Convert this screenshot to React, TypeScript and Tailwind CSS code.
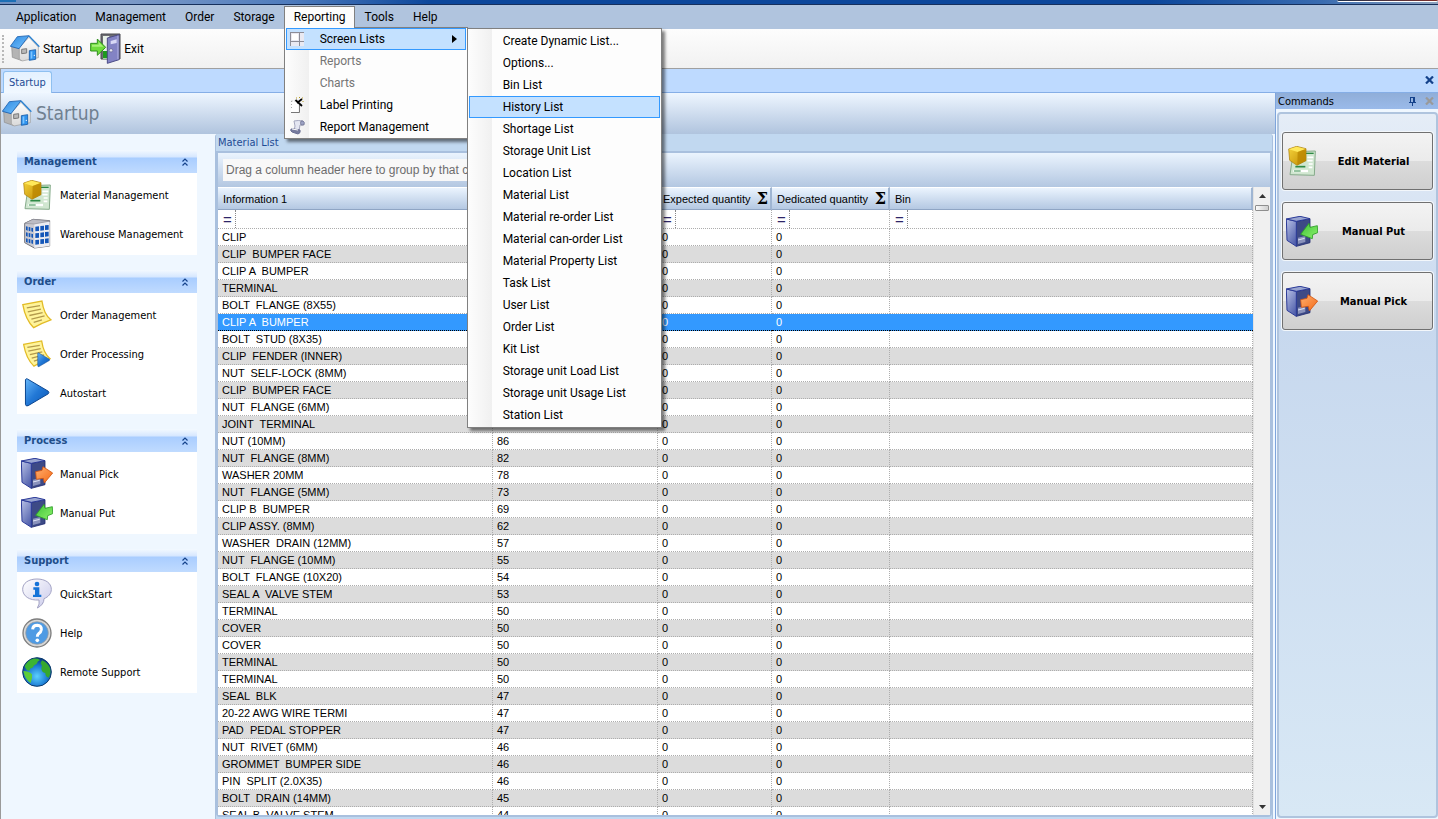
import React from "react";

const TAHOMA = "font-['DejaVu_Sans_Condensed','DejaVu_Sans',sans-serif]";

/* ---------- Icons ---------- */

function HouseIcon() {
  return (
    <svg width="30" height="27" viewBox="0 0 90 81" aria-hidden="true">
      <defs>
        <linearGradient id="roof" x1="0" y1="0" x2="1" y2="1">
          <stop offset="0" stopColor="#2f8ae0" />
          <stop offset="1" stopColor="#74c2ff" />
        </linearGradient>
        <linearGradient id="wall" x1="0" y1="0" x2="0" y2="1">
          <stop offset="0" stopColor="#ffffff" />
          <stop offset="1" stopColor="#d9d9d9" />
        </linearGradient>
      </defs>
      <path d="M5 34 28 40 36 77 7 67Z" fill="#b4b4b4" stroke="#8a8a8a" strokeWidth="2" />
      <path d="M28 37 57 7 85 36V68L36 78 28 72Z" fill="url(#wall)" stroke="#9a9a9a" strokeWidth="2" />
      <path d="M1 34 22 5 57 2 27 41Z" fill="url(#roof)" stroke="#1a5fae" strokeWidth="2.5" />
      <path d="M57 3 88 35" stroke="#2a80d0" strokeWidth="4" fill="none" />
      <path d="M35 43 50 41V54L35 56Z" fill="#b9b9b9" stroke="#7a7a7a" strokeWidth="3" />
      <path d="M58 47 77 44V73L58 76Z" fill="#2f93ee" stroke="#135aa8" strokeWidth="2.5" />
      <path d="M62 50 67 49V70L62 71Z" fill="#7cc4ff" />
      <circle cx="73" cy="61" r="2" fill="#fff" />
    </svg>
  );
}

function ExitIcon() {
  return (
    <svg width="32" height="31" viewBox="0 0 96 93" aria-hidden="true">
      <path d="M33 3H90V78H33Z" fill="#6d6d72" stroke="#4a4a50" strokeWidth="3" />
      <path d="M39 9H58V78H39Z" fill="#e8f1e8" />
      <path d="M39 54H56V76H39Z" fill="#1d9a1d" />
      <path d="M52 15 87 5V80L52 91Z" fill="#8383c4" stroke="#4c4c86" strokeWidth="3" />
      <path d="M62 24 80 19V30L62 34Z" fill="#d9d9f5" />
      <path d="M84 8V79" stroke="#b4b4e4" strokeWidth="3" />
      <circle cx="63" cy="52" r="5" fill="#e6e6ef" stroke="#55557c" strokeWidth="1.5" />
      <path d="M2 31H22V18L47 43 22 67V54H2Z" fill="#6fdc3c" stroke="#2f8f1d" strokeWidth="3" />
      <path d="M6 35H26V27L40 41H6Z" fill="#b4f58a" opacity="0.8" />
    </svg>
  );
}

function MaterialIcon() {
  return (
    <svg width="28" height="30" viewBox="0 0 84 90" aria-hidden="true">
      <defs>
        <linearGradient id="gold" x1="0" y1="0" x2="1" y2="1">
          <stop offset="0" stopColor="#f6d43c" />
          <stop offset="1" stopColor="#c08a00" />
        </linearGradient>
      </defs>
      <path d="M16 17 82 15 79 88 6 86Z" fill="#d0e6d0" stroke="#86ab8b" strokeWidth="3" />
      <path d="M54 22H77" stroke="#2e8a45" strokeWidth="4" />
      <path d="M58 34H76M58 44H74M62 54H74M62 64H73" stroke="#fff" strokeWidth="5" />
      <path d="M22 62H52" stroke="#2e8a45" strokeWidth="5" />
      <path d="M16 75H60" stroke="#fff" strokeWidth="7" />
      <path d="M18 75H38" stroke="#2e8a45" strokeWidth="3" />
      <path d="M2 9 26 1 54 8V44L27 58 5 43Z" fill="url(#gold)" stroke="#a87800" strokeWidth="2" />
      <path d="M3 10 26 2 53 9 29 18Z" fill="#ffe85a" />
      <path d="M29 18 53 9V43L28 57Z" fill="#b98500" opacity="0.75" />
    </svg>
  );
}

function WarehouseIcon() {
  const rows = [0, 1, 2];
  return (
    <svg width="28" height="31" viewBox="0 0 84 93" aria-hidden="true">
      <path d="M5 16 30 4 80 8V84L34 90 5 74Z" fill="#c9c9d0" stroke="#77777e" strokeWidth="3" />
      <path d="M34 18 80 11V84L34 90Z" fill="#ececf1" />
      <path d="M5 16 30 4 80 9 34 18Z" fill="#bcbcc4" stroke="#85858c" strokeWidth="1.5" />
      {rows.map((r) => (
        <g key={r} fill="#1456b8">
          <path d={`M9 ${25 + r * 18}l5 1v12l-5-2z`} />
          <path d={`M17 ${27 + r * 18}l5 1v12l-5-2z`} />
          <path d={`M25 ${29 + r * 18}l5 1v12l-5-2z`} />
          <path d={`M37 ${26 + r * 20}l11-1v14l-11 1z`} />
          <path d={`M52 ${24 + r * 20}l11-1v14l-11 1z`} />
          <path d={`M66 ${22 + r * 20}l11-1v14l-11 1z`} />
        </g>
      ))}
    </svg>
  );
}

function PlayShape() {
  return (
    <>
      <defs>
        <linearGradient id="play" x1="0" y1="0" x2="1" y2="1">
          <stop offset="0" stopColor="#66b6f8" />
          <stop offset="0.5" stopColor="#2278d6" />
          <stop offset="1" stopColor="#0b57b5" />
        </linearGradient>
      </defs>
      <path d="M10 5Q11 1 16 3L79 40Q83 44 79 48L18 84Q11 87 10 80Z" fill="url(#play)" stroke="#0a4590" strokeWidth="3" />
    </>
  );
}

function NoteShape() {
  return (
    <>
      <path d="M2 14 60 3Q66 44 87 60Q58 70 35 84Q10 60 2 14Z" fill="#fff49a" stroke="#e2bb26" strokeWidth="4" />
      <path d="M14 24 54 17M17 36 57 28M22 47 62 38M28 58 68 48M35 68 60 60" stroke="#b39a4c" strokeWidth="4" fill="none" />
    </>
  );
}

function NoteIcon() {
  return (
    <svg width="30" height="29" viewBox="0 0 90 88" aria-hidden="true">
      <NoteShape />
    </svg>
  );
}

function NotePlayIcon() {
  return (
    <svg width="28" height="28" viewBox="0 0 90 90" aria-hidden="true">
      <NoteShape />
      <g transform="translate(42 40) scale(0.54)">
        <PlayShape />
      </g>
    </svg>
  );
}

function PlayIcon() {
  return (
    <svg width="30" height="29" viewBox="0 0 90 88" aria-hidden="true">
      <PlayShape />
    </svg>
  );
}

function TowerIcon({ put }: { put?: boolean }) {
  return (
    <svg width="32" height="31" viewBox="0 0 96 93" aria-hidden="true">
      <defs>
        <linearGradient id="side" x1="0" y1="0" x2="0.6" y2="1">
          <stop offset="0" stopColor="#b9c2e6" />
          <stop offset="1" stopColor="#5463ae" />
        </linearGradient>
        <linearGradient id="orange" x1="0" y1="0" x2="1" y2="1">
          <stop offset="0" stopColor="#ffb070" />
          <stop offset="1" stopColor="#f46a16" />
        </linearGradient>
        <linearGradient id="green" x1="0" y1="0" x2="1" y2="1">
          <stop offset="0" stopColor="#3fc23a" />
          <stop offset="1" stopColor="#8df26a" />
        </linearGradient>
      </defs>
      <path d="M31 16 72 8V80L31 91Z" fill="#3d4a86" stroke="#232c72" strokeWidth="2.5" />
      <path d="M1 9 31 16V91L3 73Z" fill="url(#side)" stroke="#2b3a98" strokeWidth="3" />
      <path d="M1 9 42 1 72 8 31 16Z" fill="#99a5d0" stroke="#2b3a98" strokeWidth="3" />
      <path d="M36 65 58 60V78L36 84Z" fill="#8a92bc" />
      <path d="M36 72 56 67" stroke="#dfe3f5" strokeWidth="3" />
      {put ? (
        <path d="M44 55 69 22 72 34 94 29 95 50 80 56 79 68Z" fill="url(#green)" stroke="#2d9c27" strokeWidth="2.5" strokeLinejoin="round" />
      ) : (
        <path d="M44 41 63 37 66 26 95 45 70 75 67 61 46 64Z" fill="url(#orange)" stroke="#d2540f" strokeWidth="2.5" strokeLinejoin="round" />
      )}
    </svg>
  );
}

function InfoIcon() {
  return (
    <svg width="30" height="31" viewBox="0 0 90 93" aria-hidden="true">
      <defs>
        <linearGradient id="bubble" x1="0" y1="0" x2="1" y2="1">
          <stop offset="0" stopColor="#ffffff" />
          <stop offset="1" stopColor="#c9c9ea" />
        </linearGradient>
      </defs>
      <path d="M45 3C70 3 88 15 88 34C88 47 79 57 66 62Q66 80 46 90Q54 78 51 66C22 68 2 54 2 34C2 15 20 3 45 3Z" fill="url(#bubble)" stroke="#a3a3c4" strokeWidth="3" />
      <circle cx="45" cy="18" r="7" fill="#1573d8" />
      <path d="M34 28H52V50H58V57H33V50H39V35H34Z" fill="#1573d8" />
    </svg>
  );
}

function HelpIcon() {
  return (
    <svg width="30" height="30" viewBox="0 0 90 90" aria-hidden="true">
      <circle cx="45" cy="45" r="42" fill="#d6d6d6" stroke="#7d7d7d" strokeWidth="4" />
      <circle cx="45" cy="45" r="34" fill="#4f9be4" stroke="#9a9a9a" strokeWidth="2" />
      <path d="M32 34Q33 22 46 22Q59 23 58 35Q57 43 50 47Q46 50 46 56" fill="none" stroke="#fff" strokeWidth="9" />
      <circle cx="46" cy="67" r="5.500" fill="#fff" />
    </svg>
  );
}

function GlobeIcon() {
  return (
    <svg width="30" height="30" viewBox="0 0 90 90" aria-hidden="true">
      <defs>
        <radialGradient id="sea" cx="0.5" cy="0.65" r="0.6">
          <stop offset="0" stopColor="#5cd0ff" />
          <stop offset="0.6" stopColor="#1c7cd4" />
          <stop offset="1" stopColor="#0b3f86" />
        </radialGradient>
      </defs>
      <circle cx="45" cy="45" r="43" fill="url(#sea)" stroke="#0e3c6e" strokeWidth="3" />
      <path d="M8 28Q16 10 34 5Q48 4 54 9Q46 13 44 20Q34 24 32 32Q24 32 22 42Q12 40 8 28Z" fill="#3cb432" />
      <path d="M4 42Q20 42 30 52Q32 62 26 78Q8 66 4 42Z" fill="#5ccc38" />
      <path d="M60 10Q76 16 84 34Q88 50 80 62Q70 60 70 48Q58 46 58 34Q62 26 56 18Z" fill="#36a82e" />
    </svg>
  );
}

function GridIcon() {
  return (
    <svg width="14" height="14" viewBox="0 0 14 14" shapeRendering="crispEdges" aria-hidden="true">
      <rect width="14" height="14" fill="#e9e9f2" />
      <path d="M0 0.500H14M0.500 0V14M9.500 0V14M0 9.500H14" stroke="#8d8d98" fill="none" />
      <path d="M2 2H8V8H2Z" fill="#fff" />
    </svg>
  );
}

function LabelIcon() {
  return (
    <svg width="14" height="16" viewBox="0 0 14 16" aria-hidden="true">
      <path d="M1 4H8V15H1Z" fill="#fff" />
      <path d="M1.500 4H6M1.500 4V13" stroke="#aaa" strokeDasharray="1 2" fill="none" />
      <path d="M9.500 8V15.500H1" stroke="#777" fill="none" />
      <path d="M5.500 3 12 9M12 2 7 6" stroke="#000" strokeWidth="1.800" />
      <path d="M6 1H7M9 0.500H10M12 1H13M13 4V5" stroke="#b79a1e" />
    </svg>
  );
}

function ReportIcon() {
  return (
    <svg width="15" height="15" viewBox="0 0 15 15" aria-hidden="true">
      <path d="M4 1Q8 0 13 1Q15 3 13 5H10L9 11H4Q6 6 4 1Z" fill="#e4e6f2" stroke="#a4a7be" />
      <path d="M11 1Q10 3 11 5H14Q15 2 13 1Z" fill="#9da3c4" stroke="#6c6f8c" strokeWidth="0.700" />
      <path d="M1 9Q0 11 2 12L8 14Q11 13 10 10L4 9Z" fill="#767b9e" stroke="#6a6f94" />
      <path d="M2 9 8 10" stroke="#fff" />
    </svg>
  );
}

function Chevrons() {
  return (
    <svg width="6" height="8" viewBox="0 0 6 8" aria-hidden="true">
      <path d="M0.500 3.500 3 1 5.500 3.500M0.500 7.500 3 5 5.500 7.500" fill="none" stroke="#15428b" strokeWidth="1.200" />
    </svg>
  );
}

function Cross({ className }: { className: string }) {
  return (
    <svg width="9" height="8" viewBox="0 0 9 8" className={className} aria-hidden="true">
      <path d="M1 0.500 8 7.500M8 0.500 1 7.500" stroke="currentColor" strokeWidth="2.200" />
    </svg>
  );
}

function PinIcon() {
  return (
    <svg width="7" height="9" viewBox="0 0 7 9" shapeRendering="crispEdges" aria-hidden="true">
      <path d="M1 0H6V5H7V6H4V9H3V6H0V5H1ZM2 1V5H4V1Z" fill="#15428b" fillRule="evenodd" />
    </svg>
  );
}

/* ---------- Menus ---------- */

const screenLists = [
  "Create Dynamic List...",
  "Options...",
  "Bin List",
  "History List",
  "Shortage List",
  "Storage Unit List",
  "Location List",
  "Material List",
  "Material re-order List",
  "Material can-order List",
  "Material Property List",
  "Task List",
  "User List",
  "Order List",
  "Kit List",
  "Storage unit Load List",
  "Storage unit Usage List",
  "Station List",
];

const MENU_BOX =
  "absolute border border-[#808080] bg-[linear-gradient(to_right,#fdfdfd_0,#f0f0f0_24px,#fdfdfd_24px)] shadow-[3px_3px_3px_rgba(0,0,0,0.5)]";

function MenuEntry(props: { label: string; active?: boolean; disabled?: boolean; icon?: React.ReactNode; arrow?: boolean }) {
  return (
    <button
      type="button"
      role="menuitem"
      disabled={props.disabled}
      className={`flex h-[22px] w-full items-center border pr-2 text-left ${
        props.active ? "border-[#3399ff] bg-[#c4e1ff]" : "border-transparent"
      } ${props.disabled ? "text-[#757575]" : "text-black"}`}
    >
      <span className="flex w-[33px] shrink-0 items-center pl-[3px]">{props.icon}</span>
      <span className="grow whitespace-nowrap">{props.label}</span>
      {props.arrow && (
        <svg width="5" height="8" viewBox="0 0 5 8" aria-hidden="true">
          <path d="M0 0 5 4 0 8Z" fill="#000" />
        </svg>
      )}
    </button>
  );
}

function ReportingMenu() {
  return (
    <div role="menu" aria-label="Reporting" className={`${MENU_BOX} top-[21px] left-0 z-20 w-[184px] px-px`}>
      <MenuEntry label="Screen Lists" active arrow icon={<GridIcon />} />
      <MenuEntry label="Reports" disabled />
      <MenuEntry label="Charts" disabled />
      <MenuEntry label="Label Printing" icon={<LabelIcon />} />
      <MenuEntry label="Report Management" icon={<ReportIcon />} />
      <div role="menu" aria-label="Screen Lists" className={`${MENU_BOX} top-0 left-[182px] w-[195px] px-px py-px`}>
        {screenLists.map((label) => (
          <MenuEntry key={label} label={label} active={label === "History List"} />
        ))}
      </div>
    </div>
  );
}

function MenuBar() {
  return (
    <nav className="flex h-6 shrink-0 items-center bg-[#b0c4de] pl-[6px] text-[12px]">
      {["Application", "Management", "Order", "Storage", "Reporting", "Tools", "Help"].map((label) =>
        label === "Reporting" ? (
          <div key={label} className="relative">
            <button
              type="button"
              className="relative z-30 h-[22px] border border-b-0 border-[#808080] bg-[#fcfcfc] pr-2 pb-px pl-[9px]"
            >
              {label}
            </button>
            <ReportingMenu />
          </div>
        ) : (
          <button key={label} type="button" className="h-[22px] pr-[9px] pl-[10px]">
            {label}
          </button>
        )
      )}
    </nav>
  );
}

/* ---------- Sidebar ---------- */

const groups = [
  {
    title: "Management",
    items: [
      { label: "Material Management", icon: <MaterialIcon /> },
      { label: "Warehouse Management", icon: <WarehouseIcon /> },
    ],
  },
  {
    title: "Order",
    items: [
      { label: "Order Management", icon: <NoteIcon /> },
      { label: "Order Processing", icon: <NotePlayIcon /> },
      { label: "Autostart", icon: <PlayIcon /> },
    ],
  },
  {
    title: "Process",
    items: [
      { label: "Manual Pick", icon: <TowerIcon /> },
      { label: "Manual Put", icon: <TowerIcon put /> },
    ],
  },
  {
    title: "Support",
    items: [
      { label: "QuickStart", icon: <InfoIcon /> },
      { label: "Help", icon: <HelpIcon /> },
      { label: "Remote Support", icon: <GlobeIcon /> },
    ],
  },
];

function Sidebar() {
  return (
    <aside className={`flex w-[214px] shrink-0 flex-col gap-[15px] bg-[#eff7ff] pt-4 pr-[18px] pl-4 text-[11px] ${TAHOMA}`}>
      {groups.map((group) => (
        <section key={group.title} className="bg-white">
          <button
            type="button"
            className="flex h-[23px] w-full items-center justify-between bg-[linear-gradient(to_bottom,#f3f9ff_0,#d6e7ff_7px,#a9cdff_8px,#c0dbff_100%)] pr-[9px] pl-[7px] font-bold text-[#204d89]"
          >
            <span className="pt-[2px]">{group.title}</span>
            <Chevrons />
          </button>
          <ul className="pt-[2px] pb-[2px]">
            {group.items.map((item) => (
              <li key={item.label}>
                <a href="#" className="flex h-[39px] items-center pl-1">
                  <span className="flex w-8 justify-center">{item.icon}</span>
                  <span className="pt-[3px] pl-[7px] whitespace-nowrap">{item.label}</span>
                </a>
              </li>
            ))}
          </ul>
        </section>
      ))}
    </aside>
  );
}

/* ---------- Material table ---------- */

const materials: [string, string][] = [
  ["CLIP", ""],
  ["CLIP  BUMPER FACE", ""],
  ["CLIP A  BUMPER", ""],
  ["TERMINAL", ""],
  ["BOLT  FLANGE (8X55)", ""],
  ["CLIP A  BUMPER", ""],
  ["BOLT  STUD (8X35)", ""],
  ["CLIP  FENDER (INNER)", ""],
  ["NUT  SELF-LOCK (8MM)", ""],
  ["CLIP  BUMPER FACE", ""],
  ["NUT  FLANGE (6MM)", ""],
  ["JOINT  TERMINAL", ""],
  ["NUT (10MM)", "86"],
  ["NUT  FLANGE (8MM)", "82"],
  ["WASHER 20MM", "78"],
  ["NUT  FLANGE (5MM)", "73"],
  ["CLIP B  BUMPER", "69"],
  ["CLIP ASSY. (8MM)", "62"],
  ["WASHER  DRAIN (12MM)", "57"],
  ["NUT  FLANGE (10MM)", "55"],
  ["BOLT  FLANGE (10X20)", "54"],
  ["SEAL A  VALVE STEM", "53"],
  ["TERMINAL", "50"],
  ["COVER", "50"],
  ["COVER", "50"],
  ["TERMINAL", "50"],
  ["TERMINAL", "50"],
  ["SEAL  BLK", "47"],
  ["20-22 AWG WIRE TERMI", "47"],
  ["PAD  PEDAL STOPPER", "47"],
  ["NUT  RIVET (6MM)", "46"],
  ["GROMMET  BUMPER SIDE", "46"],
  ["PIN  SPLIT (2.0X35)", "46"],
  ["BOLT  DRAIN (14MM)", "45"],
  ["SEAL B  VALVE STEM", "44"],
];

const columns = [
  { title: "Information 1", sum: false },
  { title: "", sum: false },
  { title: "Expected quantity", sum: true },
  { title: "Dedicated quantity", sum: true },
  { title: "Bin", sum: false },
];

const SELECTED = 5;

function MaterialTable() {
  return (
    <table className="w-full table-fixed border-separate border-spacing-0 text-left">
      <colgroup>
        <col className="w-[275px]" />
        <col className="w-[165px]" />
        <col className="w-[114px]" />
        <col className="w-[118px]" />
        <col />
      </colgroup>
      <thead>
        <tr>
          {columns.map((c, i) => (
            <th
              key={i}
              className="border-t border-r-2 border-b border-t-white border-r-[#9fb5d2] border-b-[#8fa5c4] bg-linear-to-b from-[#ebf4fe] to-[#b4c8e2] p-0 font-normal"
            >
              <div className="flex h-[21px] items-center justify-between pt-px pr-[2px] pl-[5px]">
                <span className="whitespace-nowrap">{c.title}</span>
                {c.sum && <span className="font-['DejaVu_Serif',serif] text-[16px] leading-none font-bold">Σ</span>}
              </div>
            </th>
          ))}
        </tr>
        <tr>
          {columns.map((c, i) => (
            <td key={i} className="border-r border-b border-dotted border-[#adadad] bg-white p-0">
              <div className="flex h-[18px]">
                <span className="w-[18px] border-r border-dotted border-[#888] pl-[5px] text-[15px] leading-5 text-[#2e2668]">
                  =
                </span>
                <input aria-label={`Filter ${c.title}`} className="w-0 grow bg-transparent px-1 outline-none" />
              </div>
            </td>
          ))}
        </tr>
      </thead>
      <tbody>
        {materials.map(([name, quantity], i) => {
          const selected = i === SELECTED;
          const tone = selected
            ? "bg-[#3399ff] text-white"
            : i % 2
              ? "bg-[#dcdcdc] text-black"
              : "bg-white text-black";
          const line = selected
            ? "border-b border-dotted border-black"
            : "border-r border-b border-dotted border-[#adadad]";
          return (
            <tr key={i} className={tone}>
              {[name, quantity, "0", "0", ""].map((value, c) => (
                <td key={c} className={`h-[17px] p-0 pl-1 leading-4 whitespace-pre ${line}`}>
                  {value}
                </td>
              ))}
            </tr>
          );
        })}
      </tbody>
    </table>
  );
}

function ScrollBar() {
  return (
    <div className="flex w-[17px] shrink-0 flex-col items-center justify-between border-l border-[#e2e2e2] bg-[#f0f0f0]">
      <div className="flex w-full flex-col items-center">
        <button type="button" aria-label="Scroll up" className="flex h-[18px] w-full items-center justify-center">
          <svg width="7" height="4" viewBox="0 0 7 4" aria-hidden="true">
            <path d="M0 4 3.500 0 7 4Z" fill="#333" />
          </svg>
        </button>
        <div className="h-[6px] w-[14px] rounded-[1px] border border-[#8e8e8e] bg-linear-to-r from-[#fafafa] to-[#cfcfcf]" />
      </div>
      <button type="button" aria-label="Scroll down" className="flex h-[17px] w-full items-center justify-center">
        <svg width="7" height="4" viewBox="0 0 7 4" aria-hidden="true">
          <path d="M0 0H7L3.500 4Z" fill="#333" />
        </svg>
      </button>
    </div>
  );
}

function MaterialPanel() {
  return (
    <section className="flex min-w-0 grow flex-col rounded-t-[3px] border-x border-[#a9c0de] bg-[#c1d8f0] pb-[2px]">
      <h2 className={`h-[17px] shrink-0 pl-[2px] text-[11px] leading-[18px] text-[#1e4b94] ${TAHOMA}`}>Material List</h2>
      <div className="flex min-h-0 grow flex-col rounded-b border-2 border-[#a9c0de] font-['Liberation_Sans',Arial,sans-serif] text-[11px]">
        <div className="flex h-[34px] shrink-0 items-center bg-linear-to-b from-[#ebf4fe] to-[#b3c7e1] pl-[5px]">
          <span className="bg-[#f8f8f8] px-[3px] pt-px text-[12px] leading-[21px] text-[#6d6d6d]">
            Drag a column header here to group by that column
          </span>
        </div>
        <div className="flex min-h-0 grow bg-white">
          <div className="min-w-0 grow overflow-hidden">
            <MaterialTable />
          </div>
          <ScrollBar />
        </div>
      </div>
    </section>
  );
}

/* ---------- Commands ---------- */

function Commands() {
  const commands = [
    { label: "Edit Material", icon: <MaterialIcon /> },
    { label: "Manual Put", icon: <TowerIcon put /> },
    { label: "Manual Pick", icon: <TowerIcon /> },
  ];
  return (
    <aside className={`flex w-[163px] shrink-0 flex-col border-l border-[#7fa5dc] bg-[#eff7ff] pb-px ${TAHOMA}`}>
      <header className="flex h-4 shrink-0 items-center bg-linear-to-b from-[#90aed8] to-[#9abaea] pr-1 pl-[2px] text-[11px]">
        <h2 className="grow pt-[2px]">Commands</h2>
        <button type="button" aria-label="Pin" className="mr-[9px]">
          <PinIcon />
        </button>
        <button type="button" aria-label="Close commands">
          <Cross className="text-[#9a9a9a]" />
        </button>
      </header>
      <div className="mt-[3px] ml-px flex grow flex-col gap-3 rounded-[4px] border-2 border-[#afc4de] bg-[linear-gradient(to_bottom,#e5edf7_0,#c7d8ee_30%,#d8e8f5_100%)] px-[3px] pt-[18px]">
        {commands.map((c) => (
          <button
            key={c.label}
            type="button"
            className="flex h-[58px] items-center rounded-[3px] border border-[#707070] bg-[linear-gradient(to_bottom,#f3f3f3_0,#ebebeb_50%,#dcdcdc_50%,#cfcfcf_100%)] pl-[3px] text-[11px] font-bold shadow-[0_0_0_1px_#f3f7fb]"
          >
            <span className="flex w-8 shrink-0 justify-center">{c.icon}</span>
            <span className="grow pt-[2px] pr-[3px] text-center">{c.label}</span>
          </button>
        ))}
      </div>
    </aside>
  );
}

/* ---------- Page ---------- */

export default function App() {
  return (
    <div className="flex h-screen flex-col overflow-hidden bg-[#eff7ff] font-[Roboto,'Open_Sans',sans-serif] text-[12px] text-black">
      <div className="flex h-[5px] shrink-0 justify-between border-b border-[#16305c] bg-[linear-gradient(to_right,#6d8fc0_0,#7f9cc8_8%,#4f7cbd_20%,#0c479b_30%,#0c479b_80%,#3a6cb0_92%,#8da4c0_100%)]">
        <span className="h-[2px] w-4 bg-[#1d6fb5]" />
        <span className="h-[2px] w-[101px] rounded-b-sm border-b border-white bg-linear-to-r from-[#1c2f4a] to-[#7c2a26]" />
      </div>
      <MenuBar />
      <div className="flex h-10 shrink-0 items-center border-b border-[#a0a0a0] bg-linear-to-b from-[#fdfdfd] to-[#f1f1f1] pl-[2px]">
        <span className="mr-[6px] h-7 border-l-2 border-dotted border-[#b8b8b8]" />
        <button type="button" className="flex items-center gap-[3px] pr-2">
          <HouseIcon />
          Startup
        </button>
        <button type="button" className="flex items-center gap-[2px]">
          <ExitIcon />
          Exit
        </button>
      </div>
      <div className="flex min-h-0 grow flex-col border-l border-[#9a9a9a]">
        <div className={`flex h-6 shrink-0 items-end justify-between border-b border-[#85aee6] bg-[#bedaff] pr-1 pl-[2px] ${TAHOMA}`}>
          <button
            type="button"
            className="-mb-px h-[22px] rounded-t-[3px] border-x border-t border-[#8fc0f0] bg-linear-to-b from-[#e4f1ff] to-[#f1f8ff] px-[5px] pt-[2px] text-[11px] text-[#1e4b94]"
          >
            Startup
          </button>
          <button type="button" aria-label="Close tab" className="mb-2">
            <Cross className="text-[#15428b]" />
          </button>
        </div>
        <div className="flex min-h-0 grow">
          <div className="flex min-w-0 grow flex-col">
            <header className="flex h-[41px] shrink-0 items-center gap-1 bg-linear-to-b from-[#eef6ff] to-[#b0c4de] pl-px">
              <HouseIcon />
              <h1 className={`text-[19px] text-[#708090] ${TAHOMA}`}>Startup</h1>
            </header>
            <div className="flex min-h-0 grow pr-[2px]">
              <Sidebar />
              <MaterialPanel />
            </div>
          </div>
          <Commands />
        </div>
      </div>
    </div>
  );
}
